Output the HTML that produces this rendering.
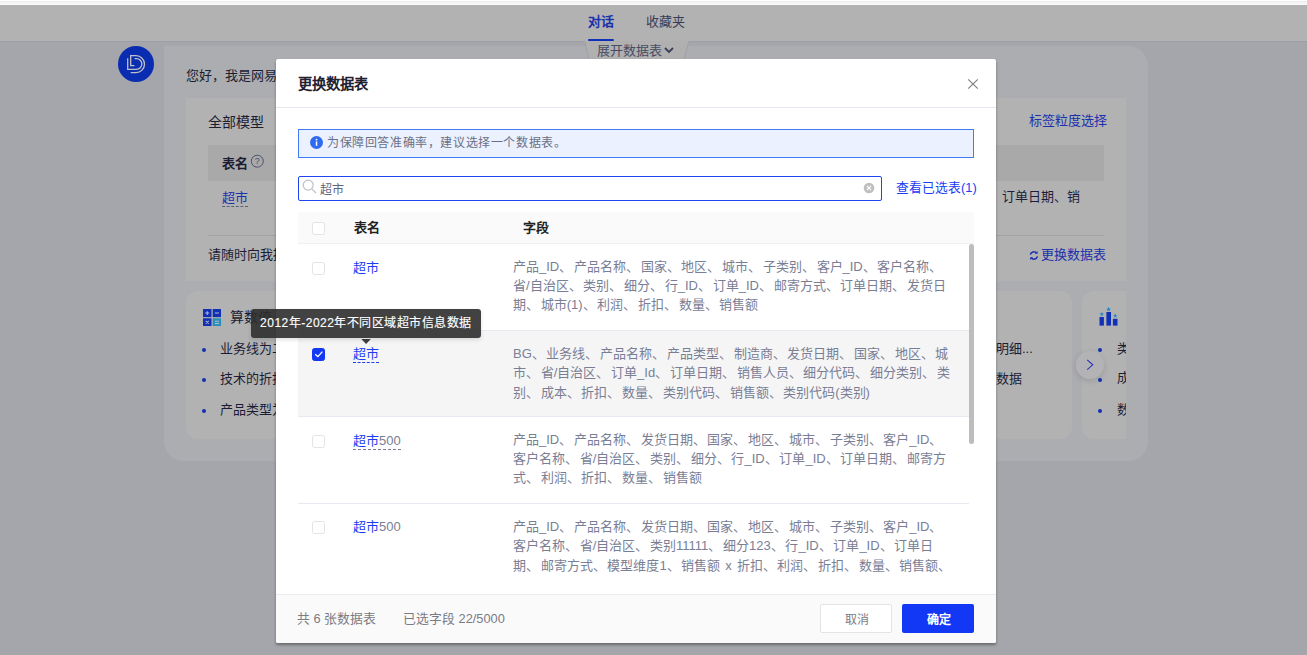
<!DOCTYPE html>
<html lang="zh-CN">
<head>
<meta charset="utf-8">
<title>更换数据表</title>
<style>
*{box-sizing:border-box;margin:0;padding:0}
html,body{width:1307px;height:655px;overflow:hidden}
body{position:relative;background:#a5a6ab;font-family:"Liberation Sans",sans-serif;font-size:13px;color:#1b1d33}
.abs{position:absolute;white-space:nowrap}
.t{position:absolute;white-space:nowrap;line-height:20px;height:20px}
/* background page */
.topstrip{left:0;top:0;width:1307px;height:5px;background:linear-gradient(#fff 0,#fff 0.8px,#ededed 1.6px,#f6f6f6 3px,#f9f9f9 5px)}
.hdr{left:0;top:5px;width:1307px;height:37px;background:#b2b2b2;border-bottom:1px solid #9d9ea7}
.chat{left:164px;top:46px;width:984px;height:415px;background:#acadb0;border-radius:0 20px 20px 20px}
.card{background:#b2b2b3}
.blue{color:#1a30ad}
.dash{border-bottom:1px dashed #4a4f7a}
/* modal */
.modal{left:276px;top:59px;width:720px;height:584px;background:#fff;box-shadow:0 2px 3px -0.5px rgba(0,0,0,.36);border-radius:2px;overflow:hidden}
.mhead{left:0;top:0;width:720px;height:49px;border-bottom:1px solid #e6e8ef}
.alert{left:22px;top:70px;width:676px;height:29px;background:#ebf1ff;border:1px solid #3d7bf7}
.search{left:22px;top:117px;width:584px;height:25px;border:1px solid #1f45f0;border-radius:2px;background:#fff}
.thead{left:22px;top:153px;width:676px;height:32px;background:#fafafa;border-bottom:1px solid #f0f0f2}
.row{left:22px;width:671px;height:86.5px;border-bottom:1px solid #e8e9f0}
.cb{position:absolute;left:14px;width:13px;height:13px;border:1px solid #e2e3e8;border-radius:2.5px;background:#fff}
.cb.on{background:#1237f5;border-color:#1237f5}
.nm{position:absolute;left:55px;color:#1a3df2;font-size:13px;line-height:16px;white-space:nowrap}
.fd{position:absolute;left:215px;color:#797e95;font-size:13px;line-height:18.8px;word-spacing:-1.9px;white-space:nowrap}
.mfoot{left:0;top:535px;width:720px;height:49px;border-top:1px solid #ececee;background:#fafafa}
.btn{position:absolute;top:9px;width:72px;height:29px;border-radius:2px;font-size:12px;line-height:27px;text-align:center}
.tip{left:251px;top:309.3px;width:230px;height:28.4px;box-shadow:0 2px 4px rgba(0,0,0,.12);background:rgba(46,46,46,.9);border-radius:3px;color:#fff;font-size:12px;letter-spacing:.5px;-webkit-text-stroke:.15px #fff;line-height:28px;text-align:center}
</style>
</head>
<body>
<!-- ===== background page (dimmed) ===== -->
<div class="abs hdr"></div>
<div class="abs topstrip"></div>
<div class="t" style="left:588px;top:12px;font-weight:bold;color:#1a30ad">对话</div>
<div class="abs" style="left:588px;top:39.4px;width:25.5px;height:1.8px;border-radius:1px;background:#1030b8"></div>
<div class="t" style="left:646px;top:12px;color:#3a3d55">收藏夹</div>

<div class="abs" style="left:118px;top:46px;width:36px;height:36px;border-radius:50%;background:#0a2cb0"></div>
<svg class="abs" style="left:118px;top:46px" width="36" height="36" viewBox="0 0 36 36" fill="none" stroke="#c0c2ca" stroke-width="1.3"><path d="M12.7 26.6H18.05A8.45 8.45 0 0 0 18.05 9.7H12.7V19.6H16.4"/><path d="M9.7 12.2V23.4H18.5A5.35 5.35 0 0 0 18.5 12.7H16.6"/></svg>

<div class="abs chat"></div>
<div class="t" style="left:186px;top:66px">您好，我是网易数帆智能分析助手</div>
<div class="abs card" style="left:186px;top:98px;width:940px;height:183px"></div>
<div class="t" style="left:208px;top:112px;font-size:14px">全部模型</div>
<div class="t blue" style="left:1029px;top:111px">标签粒度选择</div>
<div class="abs" style="left:208px;top:145px;width:896px;height:36px;background:#a9a9aa"></div>
<div class="t" style="left:222px;top:153.5px;font-weight:bold">表名</div>
<svg class="abs" style="left:250px;top:154px" width="15" height="15" viewBox="0 0 15 15"><circle cx="7.3" cy="7.2" r="6" fill="none" stroke="#4d5270" stroke-width="1"/><text x="7.3" y="10.3" font-size="9" text-anchor="middle" fill="#4d5270" font-family="Liberation Sans, sans-serif">?</text></svg>
<div class="t blue" style="left:222px;top:188px"><span class="dash" style="display:inline-block;line-height:17px;border-bottom-color:#5a5f7a">超市</span></div>
<div class="t" style="left:1002px;top:187px;color:#1c1c3c">订单日期、销</div>
<div class="abs" style="left:208px;top:235px;width:896px;height:1px;background:#a2a2a5"></div>
<div class="t" style="left:208px;top:245px">请随时向我提问</div>
<svg class="abs" style="left:1028px;top:250px" width="12" height="11" viewBox="0 0 12 11" fill="none" stroke="#1a30b0" stroke-width="1.5"><path d="M2.4 4.6a3.5 3.5 0 0 1 6.2-1.4"/><path d="M9.4 6.4a3.5 3.5 0 0 1-6.2 1.4"/><path d="M9.6 1v2.8H6.9z M2.2 10V7.2h2.7z" fill="#1a30b0" stroke="none"/></svg>
<div class="t blue" style="left:1041px;top:245px">更换数据表</div>

<div class="abs card" style="left:186px;top:291px;width:886px;height:148px;border-radius:12px"></div>
<div class="abs" style="left:1082px;top:291px;width:44px;height:148px;overflow:hidden"><div class="card" style="width:200px;height:148px;border-radius:12px"></div></div>
<svg class="abs" style="left:203px;top:308.7px" width="18.2" height="17.4" viewBox="0 0 18 18" preserveAspectRatio="none"><rect x="0" y="0" width="8.4" height="8.4" fill="#1130b4"/><rect x="9.6" y="0" width="8.4" height="8.4" fill="#1130b4"/><rect x="0" y="9.6" width="8.4" height="8.4" fill="#1130b4"/><rect x="9.6" y="9.6" width="8.4" height="8.4" fill="#2a8fb8"/><path d="M2.2 4.2h4M4.2 2.2v4M11.8 4.2h4M2.7 12.3l3 3M5.7 12.3l-3 3M11.8 12.7h4M11.8 15h4" stroke="#b8bcd0" stroke-width="1"/></svg>
<div class="t" style="left:230px;top:307px;font-size:14px">算数值</div>
<div class="abs" style="left:202px;top:347.5px;width:4px;height:4px;border-radius:50%;background:#1130b4"></div>
<div class="abs" style="left:202px;top:377.5px;width:4px;height:4px;border-radius:50%;background:#1130b4"></div>
<div class="abs" style="left:202px;top:408.5px;width:4px;height:4px;border-radius:50%;background:#1130b4"></div>
<div class="t" style="left:220px;top:339px">业务线为二</div>
<div class="t" style="left:220px;top:369px">技术的折扣</div>
<div class="t" style="left:220px;top:400px">产品类型为</div>
<div class="t" style="left:996px;top:339px">明细...</div>
<div class="t" style="left:996px;top:369px">数据</div>
<svg class="abs" style="left:1099px;top:306px" width="20" height="20" viewBox="0 0 20 20"><g fill="#1130b8"><rect x="0.5" y="11" width="4.4" height="8.6"/><rect x="7.4" y="6" width="4.6" height="13.6"/><rect x="13.9" y="12.8" width="4.6" height="6.8"/></g><g fill="#2a86c4"><path d="M2.80 5.90L 3.41 7.36L 4.99 7.49L 3.78 8.52L 4.15 10.06L 2.80 9.23L 1.45 10.06L 1.82 8.52L 0.61 7.49L 2.19 7.36Z"/><path d="M9.60 0.80L 10.26 2.39L 11.98 2.53L 10.67 3.65L 11.07 5.32L 9.60 4.42L 8.13 5.32L 8.53 3.65L 7.22 2.53L 8.94 2.39Z"/><path d="M16.20 7.50L 16.81 8.96L 18.39 9.09L 17.18 10.12L 17.55 11.66L 16.20 10.84L 14.85 11.66L 15.22 10.12L 14.01 9.09L 15.59 8.96Z"/></g></svg>
<div class="abs" style="left:1098px;top:347.5px;width:4px;height:4px;border-radius:50%;background:#1130b4"></div>
<div class="abs" style="left:1098px;top:378px;width:4px;height:4px;border-radius:50%;background:#1130b4"></div>
<div class="abs" style="left:1098px;top:408.5px;width:4px;height:4px;border-radius:50%;background:#1130b4"></div>
<div class="abs" style="left:1117px;top:339px;width:9px;height:90px;overflow:hidden;line-height:20px"><div style="height:20px">类</div><div style="height:20px;margin-top:9px">成</div><div style="height:20px;margin-top:12px">数</div></div>
<div class="abs" style="left:1075.8px;top:350.8px;width:28.5px;height:28.5px;border-radius:50%;background:#b3b3b6;box-shadow:0 2px 6px rgba(0,0,0,.13)"></div>
<svg class="abs" style="left:1085px;top:359px" width="10" height="12" viewBox="0 0 10 12"><path d="M2.2 0.9l5.6 4.9L2.2 10.7" stroke="#2530b4" stroke-width="1.05" fill="none"/></svg>

<svg class="abs" style="left:580px;top:41px" width="115" height="19" viewBox="0 0 115 19"><polygon points="4.5,0 109,0 104,18 9,18" fill="#b0b0b1"/><path d="M4.5 0L9 18M109 0L104 18" stroke="#9fa0a4" stroke-width="1" fill="none"/><path d="M85 7l4 4 4-4" stroke="#3a3d55" stroke-width="1.8" fill="none"/></svg>
<div class="t" style="left:597px;top:41px;color:#474c63">展开数据表</div>

<!-- ===== modal ===== -->
<div class="abs modal">
  <div class="abs mhead"></div>
  <div class="t" style="left:22px;top:15px;font-size:14.3px;font-weight:bold;color:#1f2030">更换数据表</div>
  <svg class="abs" style="left:691px;top:18.6px" width="12" height="12" viewBox="0 0 12 12"><path d="M1.2 1.4l9.6 9.2M10.8 1.4l-9.6 9.2" stroke="#808084" stroke-width="1.25" fill="none"/></svg>
  <div class="abs alert"></div>
  <svg class="abs" style="left:34px;top:77px" width="13" height="13" viewBox="0 0 13 13"><circle cx="6.5" cy="6.5" r="6.5" fill="#2f6bf2"/><rect x="5.8" y="5.4" width="1.5" height="4.4" fill="#fff"/><circle cx="6.5" cy="3.6" r="0.9" fill="#fff"/></svg>
  <div class="t" style="left:51px;top:74px;font-size:12px;letter-spacing:.6px;color:#6a6f85">为保障回答准确率，建议选择一个数据表。</div>
  <div class="abs search"></div>
  <svg class="abs" style="left:26px;top:120px" width="15" height="15" viewBox="0 0 15 15" fill="none" stroke="#bfc0c8" stroke-width="1.2"><circle cx="6.2" cy="6.1" r="5"/><path d="M9.8 9.8l4.2 4.2"/></svg>
  <div class="t" style="left:43.5px;top:121px;font-size:12px;color:#5f6479">超市</div>
  <svg class="abs" style="left:587px;top:123px" width="12" height="12" viewBox="0 0 12 12"><circle cx="6" cy="6" r="5.3" fill="#bfbfbf"/><path d="M3.9 3.9l4.2 4.2M8.1 3.9l-4.2 4.2" stroke="#fff" stroke-width="1.1"/></svg>
  <div class="t" style="left:620px;top:119px;color:#1a3df2;font-size:12.8px">查看已选表(1)</div>
  <div class="abs thead"></div>
  <div class="abs" style="left:22px;top:153px;width:676px;height:32px"><span class="cb" style="top:10.4px"></span></div>
  <div class="t" style="left:78px;top:159px;font-weight:bold;color:#222">表名</div>
  <div class="t" style="left:247px;top:159px;font-weight:bold;color:#222">字段</div>

  <!-- rows -->
  <div class="abs" style="left:0;top:185px;width:720px;height:350px;overflow:hidden">
    <div class="abs row" style="top:0">
      <span class="cb" style="top:17.6px"></span><span class="nm" style="top:16px">超市</span>
      <div class="fd" style="top:14.3px">产品_ID、 产品名称、 国家、 地区、 城市、 子类别、 客户_ID、 客户名称、<br>省/自治区、 类别、 细分、 行_ID、 订单_ID、 邮寄方式、 订单日期、 发货日<br>期、 城市(1)、 利润、 折扣、 数量、 销售额</div>
    </div>
    <div class="abs row" style="top:86.5px;background:#f5f5f5">
      <span class="cb on" style="top:17.4px"><svg width="13" height="13" viewBox="0 0 13 13" style="position:absolute;left:-1px;top:-1px"><path d="M3.2 6.2l2.7 2.4 4.5-5" stroke="#fff" stroke-width="1.3" fill="none"/></svg></span><span class="nm" style="top:14.5px;border-bottom:1px dashed #1a3df2;line-height:17px">超市</span>
      <div class="fd" style="top:13.3px;line-height:19.4px">BG、 业务线、 产品名称、 产品类型、 制造商、 发货日期、 国家、 地区、 城<br>市、 省/自治区、 订单_Id、 订单日期、 销售人员、 细分代码、 细分类别、 类<br>别、 成本、 折扣、 数量、 类别代码、 销售额、 类别代码(类别)</div>
    </div>
    <div class="abs row" style="top:173px">
      <span class="cb" style="top:17.6px"></span><span class="nm" style="top:15px;border-bottom:1px dashed #7a7a8a;line-height:17px">超市<span style="color:#797e95">500</span></span>
      <div class="fd" style="top:14.3px">产品_ID、 产品名称、 发货日期、 国家、 地区、 城市、 子类别、 客户_ID、<br>客户名称、 省/自治区、 类别、 细分、 行_ID、 订单_ID、 订单日期、 邮寄方<br>式、 利润、 折扣、 数量、 销售额</div>
    </div>
    <div class="abs row" style="top:259.5px;border-bottom:none">
      <span class="cb" style="top:17.6px"></span><span class="nm" style="top:15.4px">超市<span style="color:#797e95">500</span></span>
      <div class="fd" style="top:13.3px;line-height:19.4px">产品_ID、 产品名称、 发货日期、 国家、 地区、 城市、 子类别、 客户_ID、<br>客户名称、 省/自治区、 类别11111、 细分123、 行_ID、 订单_ID、 订单日<br>期、 邮寄方式、 模型维度1、 销售额<span style="word-spacing:1.2px"> x </span>折扣、 利润、 折扣、 数量、 销售额、</div>
    </div>
    <div class="abs" style="left:693px;top:0;width:5px;height:200px;border-radius:2.5px;background:#bdbdbd"></div>
  </div>

  <div class="abs mfoot">
    <div class="t" style="left:21px;top:14px;font-size:12.8px;color:#7b7b85">共 6 张数据表</div>
    <div class="t" style="left:127px;top:14px;font-size:12.8px;color:#7b7b85">已选字段 22/5000</div>
    <div class="btn" style="left:544px;border:1px solid #e3e3e8;background:#fff;color:#7b7b85;line-height:30px;padding-left:2px">取消</div>
    <div class="btn" style="left:626px;background:#1238f6;color:#fff;font-weight:bold;line-height:32px;padding-left:2px">确定</div>
  </div>
</div>

<!-- tooltip -->
<div class="abs tip">2012年-2022年不同区域超市信息数据</div>
<svg class="abs" style="left:361px;top:339px" width="10" height="6" viewBox="0 0 10 6"><path d="M0.3 0h9.6L5.1 5z" fill="rgba(46,46,46,.92)"/></svg>
</body>
</html>
